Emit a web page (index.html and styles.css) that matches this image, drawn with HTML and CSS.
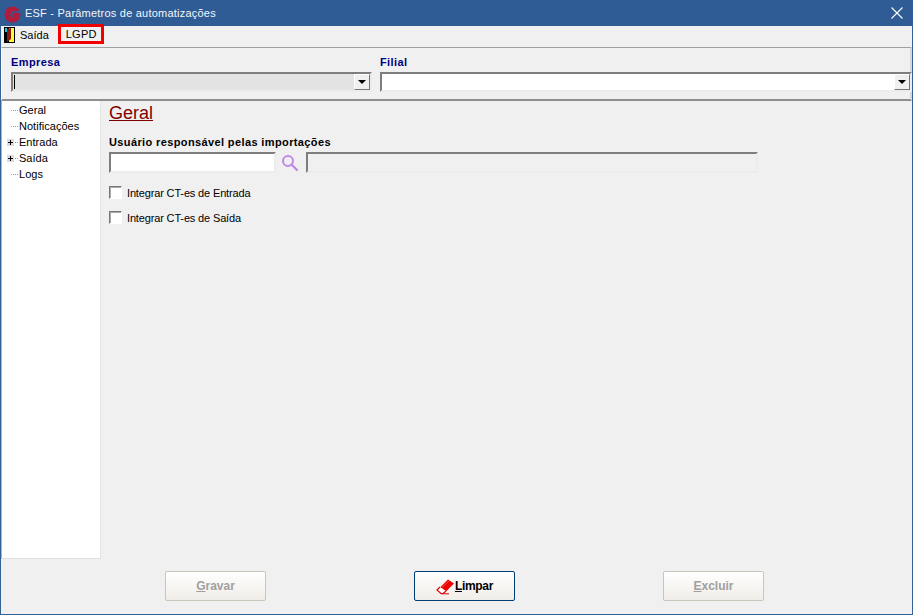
FILE: index.html
```html
<!DOCTYPE html>
<html lang="pt">
<head>
<meta charset="utf-8">
<title>ESF - Parâmetros de automatizações</title>
<link rel="stylesheet" href="styles.css">
</head>
<body>
<div class="window">
  <header class="titlebar">
    <svg class="logo" width="17" height="17" viewBox="0 0 17 17"><ellipse cx="8.500" cy="8.500" rx="8" ry="8" fill="#b01c3c"/><path d="M17 6.800C14 5.500 10 5.500 8 7.200 6.500 8.800 7.500 10.500 9.500 10.500" fill="none" stroke="#2f5c95" stroke-width="1.800"/><path d="M17 2 14 0H17Z" fill="#2f5c95"/></svg>
    <span class="title">ESF - Parâmetros de automatizações</span>
    <svg class="close" width="12" height="12" viewBox="0 0 12 12"><path d="M.5.500 11.500 11.500M11.500.500.500 11.500" stroke="#fff" stroke-width="1.100" fill="none"/></svg>
  </header>
  <nav class="menubar">
    <svg class="door" width="11" height="16" viewBox="0 0 11 16"><rect width="11" height="16" fill="#000"/><rect x="5" y="1" width="5" height="14" fill="#ffff33"/><path d="M3 2 7 1V12L3 15Z" fill="#8c1a10"/><rect x="1" y="1" width="2" height="4" fill="#19c8d8"/></svg>
    <span class="menu-item">Saída</span>
    <span class="menu-item menu-boxed">LGPD</span>
  </nav>
  <section class="filters">
    <div class="filter filter-empresa">
      <label class="filter-label">Empresa</label>
      <div class="combo combo-disabled"><span class="caret"></span><span class="combo-btn"><i class="arrow"></i></span></div>
    </div>
    <div class="filter filter-filial">
      <label class="filter-label">Filial</label>
      <div class="combo"><span class="combo-fill"></span><span class="combo-btn"><i class="arrow"></i></span></div>
    </div>
  </section>
  <main class="content">
    <ul class="tree">
      <li class="node"><span class="branch"></span>Geral</li>
      <li class="node"><span class="branch"></span>Notificações</li>
      <li class="node"><span class="branch"><i class="plus"></i></span>Entrada</li>
      <li class="node"><span class="branch"><i class="plus"></i></span>Saída</li>
      <li class="node"><span class="branch"></span>Logs</li>
    </ul>
    <div class="pane">
      <div class="form">
        <h1 class="heading">Geral</h1>
        <label class="field-label">Usuário responsável pelas importações</label>
        <div class="user-row">
          <div class="input input-user"></div>
          <svg class="search" width="18" height="18" viewBox="0 0 18 18"><circle cx="7" cy="7" r="5" fill="none" stroke="#c08ae8" stroke-width="2"/><path d="M10.500 10.500 16 16" stroke="#c08ae8" stroke-width="2.400" stroke-linecap="round"/></svg>
          <div class="input input-name"></div>
        </div>
        <label class="check"><span class="box"></span>Integrar CT-es de Entrada</label>
        <label class="check"><span class="box"></span>Integrar CT-es de Saída</label>
      </div>
    </div>
  </main>
  <footer class="actions">
    <button class="btn" disabled><u>G</u>ravar</button>
    <button class="btn btn-primary">
      <svg class="eraser" width="19" height="17" viewBox="0 0 19 17"><path d="M4 9.500 12 1.500 18 5.500 10 13.500Z" fill="#ee0000"/><path d="M4 9 1 12 5 15.500 7 15.500 10 13" fill="#fff" stroke="#e00000" stroke-width="1.200"/><path d="M5 15.800H13" stroke="#e00000"/><path d="M6 9.500 13 3" stroke="#ff6060" stroke-width=".8"/></svg>
      <span class="btn-text"><u>L</u>impar</span>
    </button>
    <button class="btn" disabled><u>E</u>xcluir</button>
  </footer>
</div>
</body>
</html>
```
FILE: styles.css
```css
* { box-sizing: border-box; }
html, body { margin: 0; height: 100%; }
body { font-family: "Liberation Sans", sans-serif; font-size: 11px; color: #000; background: #f0f0f0; overflow: hidden; }
.window { width: 913px; height: 615px; display: flex; flex-direction: column; background: #f0f0f0; border: 1px solid #356295; border-top: 0; }
.titlebar { height: 26px; margin: 0 -1px; background: #2f5c95; color: #fff; display: flex; align-items: center; padding: 3px 10px 0 4px; }
.logo { flex: none; }
.close { margin-top: -3px; }
.title { margin-left: 4px; margin-top: -3px; font-size: 11px; letter-spacing: .22px; flex: 1; color: #f4f6fa; }
.menubar { height: 20px; display: flex; align-items: center; padding-left: 3px; }
.door { flex: none; margin-top: -2px; }
.menu-item { font-size: 11px; }
.menubar .menu-item:first-of-type { margin-left: 5px; margin-top: -2px; }
.menu-boxed { align-self: flex-start; margin: -2px 0 0 9px; border: 3px solid #f00000; padding: 0 0 0 5px; height: 20px; line-height: 14px; width: 46px; letter-spacing: .25px; }
.filters { height: 54px; margin-top: 1px; border-top: 1px solid #a0a0a0; border-bottom: 2px solid #8f8f8f; border-left: 1px solid #fff; border-right: 2px solid #d8d8d8; display: flex; padding: 7px 0 0 9px; }
.filter { display: flex; flex-direction: column; }
.filter-empresa { width: 369px; }
.filter-filial { flex: 1; }
.filter-label { font-size: 11px; font-weight: 700; letter-spacing: .4px; color: #000080; line-height: 14px; margin-bottom: 3px; }
.combo { height: 20px; display: flex; background: #fff; border: 2px solid; border-color: #7e7e7e #ececec #ececec #7e7e7e; }
.filter-empresa .combo { width: 361px; }
.filter-filial .combo { margin-right: -2px; }
.combo-disabled { background: #e3e3e3; }
.caret { width: 1px; height: 14px; margin: 1px 0 0 1px; background: #000; }
.combo-fill { flex: 1; }
.combo-btn { margin-left: auto; width: 16px; height: 16px; background: #f0f0f0; border: 1px solid; border-color: #fff #777 #777 #fff; display: flex; align-items: center; justify-content: center; }
.arrow { width: 0; height: 0; border: 4px solid transparent; border-top: 4px solid #000; border-bottom: 0; }
.content { flex: 1; display: flex; min-height: 0; }
.tree { width: 100px; height: 458px; margin: 0; padding: 1px 0 0; list-style: none; background: #fff; border-left: 1px solid #aab4c4; border-bottom: 1px solid #e0e0e0; border-right: 1px solid #e4e4e4; font-size: 11px; letter-spacing: .03px; flex: none; }
.node { height: 16px; display: flex; align-items: center; line-height: 16px; }
.branch { width: 17px; height: 100%; position: relative; flex: none; }
.branch::after { content: ""; position: absolute; left: 9px; right: 1px; top: 8px; border-top: 1px dotted #a0a0a0; }
.plus { position: absolute; left: 5px; top: 5px; width: 7px; height: 7px; background: linear-gradient(#000, #000) center / 5px 1px no-repeat, linear-gradient(#000, #000) center / 1px 5px no-repeat, #dcdcdc; z-index: 1; }
.pane { flex: 1; }
.form { padding: 1px 0 0 8px; }
.heading { margin: 0; font-size: 18px; font-weight: 400; line-height: 22px; color: #800000; text-decoration: underline; }
.field-label { display: block; margin-top: 11px; font-size: 11px; font-weight: 700; letter-spacing: .38px; line-height: 14px; }
.user-row { display: flex; align-items: center; margin-top: 3px; height: 21px; }
.input { height: 21px; border: 2px solid; border-color: #7e7e7e #ececec #ececec #7e7e7e; }
.input-user { width: 167px; background: #fff; }
.search { margin-left: 5px; flex: none; }
.input-name { width: 452px; margin-left: 7px; background: #f0f0f0; }
.check { display: flex; align-items: center; font-size: 11px; height: 13px; margin-top: 12px; letter-spacing: -.15px; }
.user-row + .check { margin-top: 13px; }
.box { width: 13px; height: 13px; margin-right: 5px; background: #fff; border: 1px solid; border-color: #777 #fff #fff #777; box-shadow: inset 1px 1px 0 #aaa; flex: none; }
.actions { height: 54px; display: flex; padding: 11px 0 0 164px; }
.btn { width: 101px; height: 30px; border-radius: 2px; border: 1px solid #c9c5bb; background: linear-gradient(#fff, #f0ede8); font-family: "Liberation Sans", sans-serif; font-size: 12px; font-weight: 700; color: #a0a0a0; display: flex; align-items: center; justify-content: center; padding: 0; }
.btn-primary { margin: 0 148px; border-color: #003c74; color: #000; }
.btn-text { letter-spacing: -.3px; }
.eraser { flex: none; }
```
